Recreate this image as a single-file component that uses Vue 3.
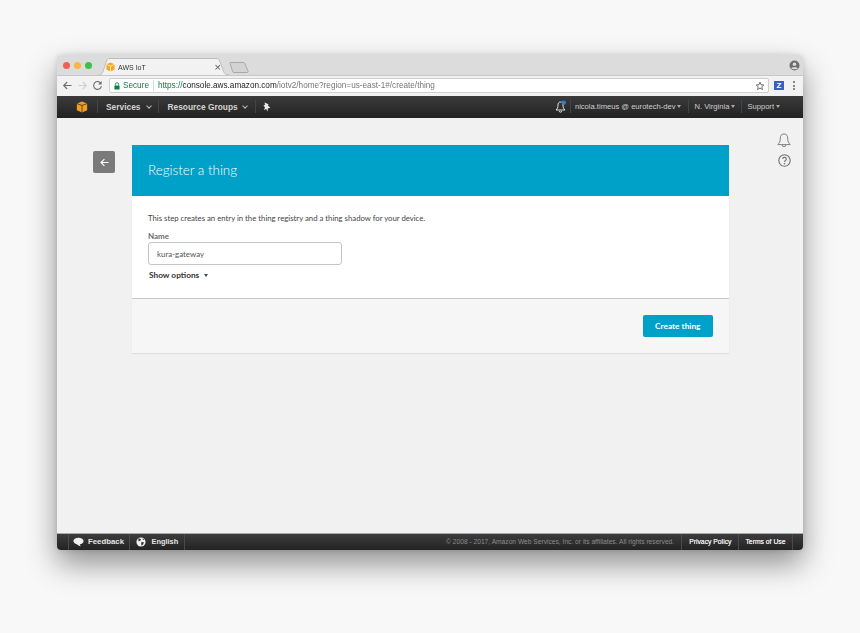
<template>
  <div class="stage">
    <div class="win">
      <!-- tabs -->
      <div class="tabstrip">
        <div class="lights">
          <i class="dot red"></i><i class="dot yellow"></i><i class="dot green"></i>
        </div>
        <div class="tab">
          <svg class="tabShape" width="132" height="17" viewBox="0 0 132 17">
            <path d="M0 17 C4 17 4.5 15 5.5 12 L8.5 3 C9.2 1 10 .5 12 .5 H118 C120 .5 121 1 121.7 3 L125 12 C126 15 127 17 132 17" fill="#f2f2f2" stroke="#bdbdbd" />
          </svg>
          <svg class="fav" width="9" height="10" viewBox="0 0 10 11">
            <path d="M5 .5 L9.5 2.4 V8.4 L5 10.5 L.5 8.4 V2.4 Z" fill="#f7a81b" />
            <path d="M5 4.5 V10.5 M.5 2.6 L5 4.5 L9.5 2.6" fill="none" stroke="#fff" stroke-width=".8" />
          </svg>
          <span class="tabTitle">AWS IoT</span>
          <span class="tabX">×</span>
        </div>
        <svg class="newTab" width="20" height="11" viewBox="0 0 20 11">
          <path d="M1 1.2 C1 .6 1.4 .5 2 .5 H14 C15 .5 15.4 .8 15.8 1.5 L19 9 C19.3 10 19 10.5 18 10.5 H5 C4.2 10.5 3.9 10.2 3.6 9.5 Z" fill="#d3d3d3" stroke="#a9a9a9" />
        </svg>
        <svg class="profile" width="11" height="11" viewBox="0 0 11 11">
          <circle cx="5.5" cy="5.5" r="5" fill="#6e6e6e" />
          <circle cx="5.5" cy="4.2" r="1.8" fill="#dcdcdc" />
          <path d="M2.2 8.3 C3 6.9 8 6.9 8.8 8.3 C8 9.6 3 9.6 2.2 8.3Z" fill="#dcdcdc" />
        </svg>
      </div>

      <!-- toolbar -->
      <div class="toolbar">
        <svg class="navIcon" width="11" height="11" viewBox="0 0 11 11">
          <path d="M9.5 5.5 H2 M5.2 2 L1.7 5.5 L5.2 9" fill="none" stroke="#6b6f73" stroke-width="1.1" />
        </svg>
        <svg class="navIcon" width="11" height="11" viewBox="0 0 11 11">
          <path d="M1.5 5.5 H9 M5.8 2 L9.3 5.5 L5.8 9" fill="none" stroke="#cfcfcf" stroke-width="1.1" />
        </svg>
        <svg class="navIcon" width="11" height="11" viewBox="0 0 11 11">
          <path d="M9 3.6 A3.9 3.9 0 1 0 9.4 6.2" fill="none" stroke="#6b6f73" stroke-width="1.1" />
          <path d="M9.6 1 V4.4 H6.2 Z" fill="#6b6f73" />
        </svg>
        <div class="omni">
          <svg class="lock" width="6" height="8" viewBox="0 0 7 9">
            <path d="M1.6 4 V2.6 a1.9 1.9 0 0 1 3.8 0 V4" fill="none" stroke="#0b8043" />
            <rect x=".5" y="3.8" width="6" height="4.8" rx=".6" fill="#0b8043" />
          </svg>
          <span class="secure">Secure</span>
          <span class="sep"></span>
          <span class="url"><em>https://</em><b>console.aws.amazon.com</b>/iotv2/home?region=us-east-1#/create/thing</span>
          <svg class="star" width="10" height="10" viewBox="0 0 10 10">
            <path d="M5 1.2 L6.1 3.8 L8.9 4 L6.8 5.8 L7.5 8.6 L5 7.1 L2.5 8.6 L3.2 5.8 L1.1 4 L3.9 3.8 Z" fill="none" stroke="#5f6368" stroke-width=".9" />
          </svg>
        </div>
        <span class="zIcon">Z</span>
        <span class="kebab"><i></i><i></i><i></i></span>
      </div>

      <!-- aws nav -->
      <nav class="awsNav">
        <span class="navCell logoCell">
          <svg width="12" height="12" viewBox="0 0 13 14">
            <path d="M6.5 .5 L12.5 2.8 V10.8 L6.5 13.5 L.5 10.8 V2.8 Z" fill="#f79c1d" />
            <path d="M6.5 5.2 V13.5 M.5 3 L6.5 5.2 L12.5 3" fill="none" stroke="#2f2f2f" stroke-width=".9" />
          </svg>
        </span>
        <span class="navCell menu services">Services <i class="chev"></i></span>
        <span class="navCell menu groups">Resource Groups <i class="chev"></i></span>
        <span class="navCell pin">
          <svg width="9" height="10" viewBox="0 0 9 10">
            <path d="M2.6 .5 L6.6 2.2 L5.8 3.6 L8.4 5.6 L5.9 6.4 L5.6 9.6 L4.2 6.9 L1.9 8 L3 5.4 L1.4 3.2 L3 3 Z" fill="#e8e8e8" />
          </svg>
        </span>
        <span class="spacer"></span>
        <span class="navCell bellCell">
          <svg width="12" height="13" viewBox="0 0 12 13">
            <path d="M5.5 2 C3.5 2 3 3.5 3 5 C3 7.5 2.5 8.5 1 10 H10 C8.5 8.5 8 7.5 8 5 C8 3.5 7.5 2 5.5 2 Z M4.3 11 a1.2 1.2 0 0 0 2.4 0" fill="none" stroke="#e4e4e4" />
            <circle cx="8.8" cy="2.6" r="2.2" fill="#2a7de1" />
          </svg>
        </span>
        <span class="navCell small user">nicola.timeus @ eurotech-dev <i class="caret"></i></span>
        <span class="navCell small">N. Virginia <i class="caret"></i></span>
        <span class="navCell small last">Support <i class="caret"></i></span>
      </nav>

      <!-- page -->
      <main class="content">
        <button class="back" type="button">
          <svg width="9" height="9" viewBox="0 0 9 9">
            <path d="M8.5 4.5 H1.2 M4.4 1.1 L1 4.5 L4.4 7.9" fill="none" stroke="#fff" stroke-width="1.1" />
          </svg>
        </button>

        <section class="card">
          <header class="cardHead">Register a thing</header>
          <div class="cardBody">
            <p class="intro">This step creates an entry in the thing registry and a thing shadow for your device.</p>
            <label class="nameLabel">Name</label>
            <input class="nameInput" type="text" value="kura-gateway" />
            <div class="options">Show options <i class="optCaret"></i></div>
          </div>
          <footer class="cardFoot">
            <button class="createBtn" type="button">Create thing</button>
          </footer>
        </section>

        <div class="sideIcons">
          <svg width="14" height="15" viewBox="0 0 14 15">
            <path d="M7 1 C4.3 1 3.3 3 3.3 5.2 C3.3 8.2 2.6 9.8 .8 11.6 H13.2 C11.4 9.8 10.7 8.2 10.7 5.2 C10.7 3 9.7 1 7 1 Z M5.2 12 a1.8 1.8 0 0 0 3.6 0" fill="none" stroke="#808080" />
          </svg>
          <svg width="13" height="13" viewBox="0 0 13 13">
            <circle cx="6.5" cy="6.5" r="5.7" fill="none" stroke="#707070" stroke-width="1.1" />
            <path d="M4.7 5 a1.8 1.7 0 1 1 2.8 1.5 C6.8 7 6.5 7.3 6.5 8" fill="none" stroke="#707070" stroke-width="1.1" />
            <circle cx="6.5" cy="9.7" r=".8" fill="#707070" />
          </svg>
        </div>
      </main>

      <!-- footer -->
      <footer class="awsFoot">
        <span class="fCell first">
          <svg width="11" height="10" viewBox="0 0 13 11">
            <path d="M6.5 .5 C10 .5 12.5 2 12.5 4.4 C12.5 6.6 10.6 8 8 8.2 C8 9 8.6 9.8 9.4 10.4 C7.4 10.3 5.6 9.4 4.6 8.1 C2.2 7.7 .5 6.3 .5 4.4 C.5 2 3 .5 6.5 .5 Z" fill="#f0f0f0" />
          </svg>
          Feedback
        </span>
        <span class="fCell second">
          <svg width="10" height="10" viewBox="0 0 11 11">
            <circle cx="5.5" cy="5.5" r="5" fill="#f0f0f0" />
            <path d="M3 1.5 L5.5 2.5 L4.8 4.2 L3 4.6 L2.4 3.4 Z M6 5.4 L8.6 5.6 L8 8 L6.4 9.6 L5.6 7.6 Z M7.2 1.4 L9.2 3 L7.6 3.4 Z" fill="#3a3a3a" />
          </svg>
          English
        </span>
        <span class="spacer"></span>
        <span class="copy">© 2008 - 2017, Amazon Web Services, Inc. or its affiliates. All rights reserved.</span>
        <span class="fLink">Privacy Policy</span>
        <span class="fLink">Terms of Use</span>
      </footer>
    </div>
  </div>
</template>

<script setup>
</script>

<style>
html, body { margin: 0; background: #f8f8f8; }
</style>

<style scoped>
.stage {
  width: 860px;
  height: 633px;
  padding: 55px 57px 0;
  box-sizing: border-box;
  overflow: hidden;
  font-family: "Liberation Sans", Arial, sans-serif;
  filter: blur(0.4px);
}
.win {
  width: 746px;
  height: 495px;
  display: flex;
  flex-direction: column;
  border-radius: 4px;
  overflow: hidden;
  background: #f1f1f1;
  box-shadow: 0 14px 30px rgba(0, 0, 0, .42), 0 0 6px rgba(0, 0, 0, .12);
}

/* tabs */
.tabstrip {
  height: 20px;
  flex: none;
  display: flex;
  align-items: flex-end;
  background: #dcdcdc;
  padding-left: 6px;
  box-sizing: border-box;
}
.lights { display: flex; gap: 4px; align-self: flex-start; margin-top: 6.5px; }
.dot { width: 7px; height: 7px; border-radius: 50%; display: block; }
.red { background: #f25f58; }
.yellow { background: #f9b73c; }
.green { background: #3bc349; }
.tab {
  position: relative;
  width: 132px;
  height: 17px;
  margin-left: 6px;
  display: flex;
  align-items: center;
  padding: 1px 9px 0 8px;
  box-sizing: border-box;
  font-size: 7px;
  color: #333;
}
.tabShape { position: absolute; left: 0; top: 0; }
.fav { position: relative; flex: none; margin-right: 3px; }
.tabTitle { position: relative; flex: 1; }
.tabX { position: relative; font-size: 11px; color: #555; line-height: 1; }
.newTab { margin: 0 0 2px -1px; flex: none; }
.profile { margin: 0 3px 4px auto; align-self: flex-end; flex: none; }

/* toolbar */
.toolbar {
  height: 20.5px;
  flex: none;
  display: flex;
  align-items: center;
  background: #f2f2f2;
  border-top: 1px solid #c8c8c8;
  box-sizing: border-box;
  padding-left: 5px;
}
.navIcon { margin-right: 4px; flex: none; }
.omni {
  width: 660px;
  height: 15px;
  margin-left: 2px;
  flex: none;
  display: flex;
  align-items: center;
  background: #fff;
  border: 1px solid #cfcfcf;
  border-radius: 2px;
  box-sizing: border-box;
  padding: 0 3px 0 4px;
  font-size: 8.2px;
  white-space: nowrap;
}
.lock { flex: none; margin-right: 3px; }
.secure { color: #0b8043; }
.sep { width: 1px; height: 11px; background: #d8d8d8; margin: 0 4px; }
.url { color: #777; flex: 1; }
.url em { font-style: normal; color: #0b8043; }
.url b { font-weight: 400; color: #222; }
.star { flex: none; }
.zIcon {
  width: 10px;
  height: 9px;
  margin-left: 5px;
  background: #3b5fc0;
  color: #fff;
  font-size: 8px;
  font-weight: 700;
  line-height: 9px;
  text-align: center;
}
.kebab { display: flex; flex-direction: column; gap: 1.5px; margin-left: 9px; }
.kebab i { width: 2px; height: 2px; border-radius: 50%; background: #666; display: block; }

/* aws nav */
.awsNav {
  height: 22px;
  flex: none;
  display: flex;
  align-items: center;
  background: linear-gradient(#3b3b3b, #222);
  color: #e8e8e8;
  white-space: nowrap;
}
.navCell { display: flex; align-items: center; height: 13px; }
.logoCell { padding: 0 9px 0 19px; border-right: 1px solid #444; }
.menu {
  font-size: 8.4px;
  font-weight: 700;
  color: #d4d4d4;
  border-right: 1px solid #444;
  gap: 5px;
}
.services { padding: 0 7px 0 8px; }
.groups { padding: 0 8px 0 8px; gap: 3.5px; }
.pin { padding-left: 5.5px; }
.spacer { flex: 1; }
.bellCell { padding-right: 3px; border-right: 1px solid #444; }
.small {
  font-size: 7.6px;
  color: #cfcfcf;
  padding: 0 6px 0 5px;
  border-right: 1px solid #444;
  gap: 2px;
}
.small.user { padding-left: 4px; padding-right: 7px; }
.small.last { border-right: 0; padding-right: 23px; }
.chev {
  width: 3px;
  height: 3px;
  border-right: 1px solid #bbb;
  border-bottom: 1px solid #bbb;
  transform: rotate(45deg);
  margin: -2px 0 0 2px;
}
.caret {
  border-left: 2.5px solid transparent;
  border-right: 2.5px solid transparent;
  border-top: 3px solid #aaa;
}

/* page */
.content {
  flex: 1;
  display: flex;
  align-items: flex-start;
  padding: 27.5px 0 0 36px;
  background: #f1f1f1;
  border-bottom: 1px solid #aaa;
  box-sizing: border-box;
  min-height: 0;
}
.back {
  width: 22px;
  height: 22px;
  margin: 6px 16.5px 0 0;
  flex: none;
  padding: 0;
  border: 0;
  border-radius: 2px;
  background: #7a7a7a;
  display: flex;
  align-items: center;
  justify-content: center;
}
.card {
  width: 597.5px;
  flex: none;
  background: #fff;
  box-shadow: 0 1px 1px rgba(0, 0, 0, .08);
  font-family: Lato, "Open Sans", sans-serif;
}
.cardHead {
  height: 51px;
  padding: 0 0 1px 16.5px;
  box-sizing: border-box;
  display: flex;
  align-items: center;
  background: #00a1c9;
  color: #fff;
  font-size: 13.4px;
  font-weight: 300;
}
.cardBody {
  height: 103px;
  box-sizing: border-box;
  padding: 17px 16.5px 0;
  border-bottom: 1px solid #c8c8c8;
}
.intro { margin: 0; font-size: 7.75px; line-height: 11px; color: #444; }
.nameLabel { display: block; margin-top: 7px; font-size: 8px; line-height: 10px; font-weight: 700; color: #6b6b6b; }
.nameInput {
  display: block;
  width: 194px;
  height: 23px;
  margin-top: 1px;
  padding: 0 8px;
  box-sizing: border-box;
  border: 1px solid #c4c4c4;
  border-radius: 3px;
  background: #fff;
  font-family: inherit;
  font-size: 7.9px;
  color: #555;
  outline: none;
}
.options {
  display: flex;
  align-items: center;
  gap: 5px;
  margin: 5px 0 0 1px;
  font-size: 8.3px;
  font-weight: 700;
  color: #333;
}
.optCaret {
  border-left: 2.5px solid transparent;
  border-right: 2.5px solid transparent;
  border-top: 3px solid #444;
}
.cardFoot {
  height: 54px;
  box-sizing: border-box;
  background: #f6f6f6;
  display: flex;
  justify-content: flex-end;
  align-items: flex-start;
  padding: 16px 16.5px 0 0;
}
.createBtn {
  width: 69.5px;
  height: 22px;
  padding: 0;
  border: 0;
  border-radius: 2px;
  background: #00a1c9;
  color: #fff;
  font-family: inherit;
  font-size: 8.3px;
  font-weight: 700;
}
.sideIcons {
  display: flex;
  flex-direction: column;
  align-items: center;
  gap: 6px;
  margin: -12px 0 0 48px;
}

/* footer */
.awsFoot {
  height: 16.5px;
  flex: none;
  display: flex;
  align-items: center;
  background: linear-gradient(#3c3c3c, #232323);
  white-space: nowrap;
}
.fCell {
  height: 16.5px;
  display: flex;
  align-items: center;
  border-right: 1px solid #4a4a4a;
  color: #e6e6e6;
  font-size: 7.8px;
  font-weight: 700;
}
.fCell.first { margin-left: 11px; border-left: 1px solid #4a4a4a; padding: 0 5.5px 0 4px; gap: 4px; }
.fCell.second { padding: 0 6px; gap: 5px; font-size: 7.4px; }
.copy { font-size: 6.67px; color: #8c8c8c; padding-right: 7px; }
.fLink {
  height: 16.5px;
  display: flex;
  align-items: center;
  padding: 0 7px;
  border-left: 1px solid #4a4a4a;
  font-size: 6.8px;
  color: #e6e6e6;
  text-shadow: 0 0 .5px #fff;
}
.fLink:last-child { border-right: 1px solid #4a4a4a; margin-right: 10.5px; padding: 0 6px; }
</style>
